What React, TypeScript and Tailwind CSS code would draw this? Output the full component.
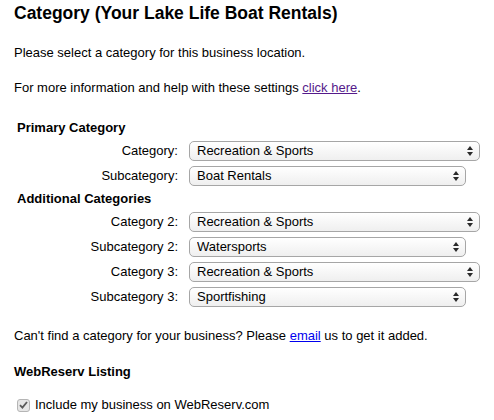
import React from "react";

// ─── Select box (mac-style) ─────────────────────────────────────

function SelectBox({ value, wide }: { value: string; wide?: boolean }) {
  return (
    <div className={`relative h-[20px] ${wide ? "w-[292px]" : "w-[277px]"}`}>
      <select
        defaultValue={value}
        className="appearance-none w-full h-full rounded-[5px] border border-[#a6a6a6] bg-linear-to-b from-white to-[#efefef] pl-[7px] pr-5 text-[13px] leading-[16px] text-black outline-none"
      >
        <option value={value}>{value}</option>
      </select>
      <svg
        className="pointer-events-none absolute right-[7px] top-[5px]"
        width="6"
        height="10"
        viewBox="0 0 6 10"
      >
        <polygon points="0,4 3,0 6,4" fill="#2a2a2a" />
        <polygon points="0,6 3,10 6,6" fill="#2a2a2a" />
      </svg>
    </div>
  );
}

function Row({ label, value, wide }: { label: string; value: string; wide?: boolean }) {
  return (
    <div className="flex items-center h-[20px] gap-[11px]">
      <span className="w-[164px] shrink-0 text-right">{label}</span>
      <SelectBox value={value} wide={wide} />
    </div>
  );
}

// ─── Main Component ─────────────────────────────────────────────

export default function App() {
  return (
    <div className="font-['Liberation_Sans',Arial,Helvetica,sans-serif] text-black text-[13px] leading-[16px] w-[494px] h-[420px] bg-white px-[14px] pt-[3px] overflow-hidden">
      <h1 className="text-[17.5px] leading-[20px] font-bold">Category (Your Lake Life Boat Rentals)</h1>

      <p className="mt-[22px]">Please select a category for this business location.</p>
      <p className="mt-[19px]">
        For more information and help with these settings{" "}
        <a href="#" className="text-[#551a8b] underline">click here</a>.
      </p>

      {/* Primary */}
      <div className="mt-[24px] pl-[3px] font-bold">Primary Category</div>
      <div className="mt-[5px] flex flex-col gap-[5px]">
        <Row label="Category:" value="Recreation & Sports" wide />
        <Row label="Subcategory:" value="Boat Rentals" />
      </div>

      {/* Additional */}
      <div className="mt-[5px] pl-[3px] font-bold">Additional Categories</div>
      <div className="mt-[5px] flex flex-col gap-[5px]">
        <Row label="Category 2:" value="Recreation & Sports" wide />
        <Row label="Subcategory 2:" value="Watersports" />
        <Row label="Category 3:" value="Recreation & Sports" wide />
        <Row label="Subcategory 3:" value="Sportfishing" />
      </div>

      <p className="mt-[21px]">
        Can't find a category for your business? Please{" "}
        <a href="#" className="text-[#0000ee] underline">email</a> us to get it added.
      </p>

      <div className="mt-[20px] font-bold">WebReserv Listing</div>

      <label className="mt-[17px] pl-[3px] flex items-center gap-[5px]">
        <span className="w-[13px] h-[13px] rounded-[3px] border border-[#b5b5b5] bg-[#e6e6e6] flex items-center justify-center">
          <svg width="9" height="8" viewBox="0 0 9 8">
            <path d="M1 4.2 L3.4 6.6 L8 1" stroke="#5a5a5a" strokeWidth="1.8" fill="none" />
          </svg>
        </span>
        <span>Include my business on WebReserv.com</span>
      </label>
    </div>
  );
}
